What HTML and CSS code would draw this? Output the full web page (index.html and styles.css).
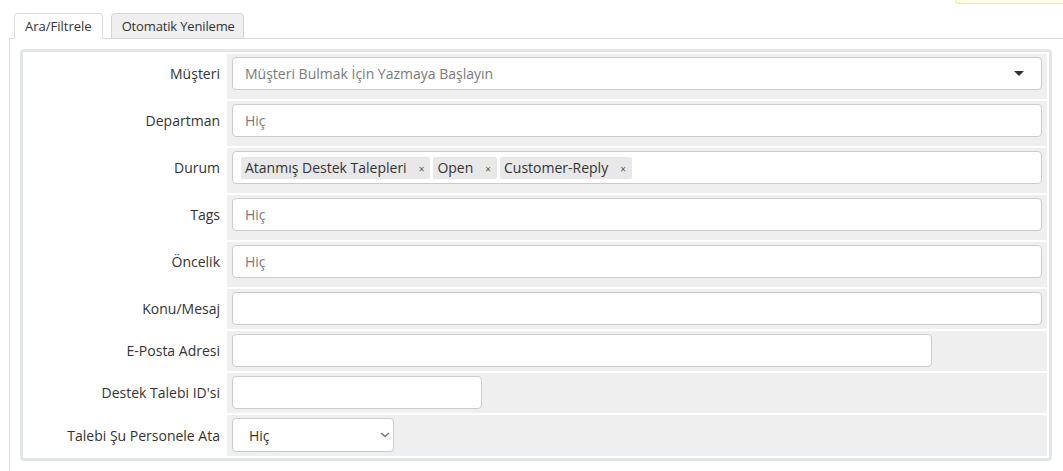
FILE: index.html
```html
<!DOCTYPE html>
<html lang="tr">
<head>
    <meta charset="UTF-8">
    <title>Destek Talepleri - Ara/Filtrele</title>
    <link rel="stylesheet" href="styles.css">
</head>
<body>
    <div class="notice"></div>

    <div class="page">
        <ul class="tabs">
            <li class="tab active">Ara/Filtrele</li>
            <li class="tab">Otomatik Yenileme</li>
        </ul>

        <div class="tab-content">
            <table class="form">
                <tr class="tall">
                    <td class="fieldlabel">Müşteri</td>
                    <td class="fieldarea">
                        <div class="field combo">
                            <span class="placeholder">Müşteri Bulmak İçin Yazmaya Başlayın</span>
                            <span class="caret"></span>
                        </div>
                    </td>
                </tr>
                <tr class="tall">
                    <td class="fieldlabel">Departman</td>
                    <td class="fieldarea">
                        <div class="field"><span class="placeholder">Hiç</span></div>
                    </td>
                </tr>
                <tr class="tall">
                    <td class="fieldlabel">Durum</td>
                    <td class="fieldarea">
                        <div class="field tags">
                            <span class="chip">Atanmış Destek Talepleri<span class="remove">×</span></span>
                            <span class="chip">Open<span class="remove">×</span></span>
                            <span class="chip">Customer-Reply<span class="remove">×</span></span>
                        </div>
                    </td>
                </tr>
                <tr class="tall">
                    <td class="fieldlabel">Tags</td>
                    <td class="fieldarea">
                        <div class="field"><span class="placeholder">Hiç</span></div>
                    </td>
                </tr>
                <tr class="tall">
                    <td class="fieldlabel">Öncelik</td>
                    <td class="fieldarea">
                        <div class="field"><span class="placeholder">Hiç</span></div>
                    </td>
                </tr>
                <tr>
                    <td class="fieldlabel">Konu/Mesaj</td>
                    <td class="fieldarea"><input type="text" class="input"></td>
                </tr>
                <tr>
                    <td class="fieldlabel">E-Posta Adresi</td>
                    <td class="fieldarea"><input type="text" class="input input-700"></td>
                </tr>
                <tr>
                    <td class="fieldlabel">Destek Talebi ID'si</td>
                    <td class="fieldarea"><input type="text" class="input input-250"></td>
                </tr>
                <tr>
                    <td class="fieldlabel">Talebi Şu Personele Ata</td>
                    <td class="fieldarea">
                        <div class="select-wrap">
                            <select class="select">
                                <option>Hiç</option>
                            </select>
                            <svg class="chevron" width="10" height="6" viewBox="0 0 10 6">
                                <path d="M1 1l4 3.5L9 1" fill="none" stroke="#777" stroke-width="1.4"/>
                            </svg>
                        </div>
                    </td>
                </tr>
            </table>
        </div>
    </div>
</body>
</html>
```

FILE: styles.css
```css
body {
    margin: 0;
    font-family: "Open Sans", "Liberation Sans", sans-serif;
    font-size: 14px;
    color: #333;
    background: #fff;
    overflow: hidden;
}
.notice {
    position: absolute;
    top: -20px;
    right: -10px;
    width: 116px;
    height: 22px;
    background: #fffde6;
    border: 1px solid #f6e983;
    border-radius: 4px;
}
.page {
    padding: 13px 0 0 9px;
}
.tabs {
    display: flex;
    gap: 8px;
    margin: 0 0 -1px;
    padding: 0 0 0 5px;
    list-style: none;
    font-size: 13px;
}
.tab {
    height: 24px;
    line-height: 24px;
    padding: 0 10px;
    border: 1px solid #d4d4d4;
    border-radius: 4px 4px 0 0;
    background: #efefef;
    color: #333;
}
.tab.active {
    background: #fff;
    border-color: #ddd #ddd #fff;
}
.tab + .tab {
    padding: 0 8px 0 10px;
    letter-spacing: -0.15px;
}
.tab-content {
    border: 1px solid #ddd;
    border-right: 0;
    border-bottom: 0;
    padding: 10px 10px 0;
    height: 422px;
}
.form {
    width: 1032px;
    border: 3px solid #e3e6e9;
    border-radius: 4px;
    border-spacing: 2px;
}
.form td {
    padding: 3px 5px 4px;
    vertical-align: middle;
}
.form tr.tall td {
    padding-bottom: 9px;
}
.fieldlabel {
    width: 190px;
    text-align: right;
    background: #fff;
}
.fieldarea {
    background: #efefef;
}
.field,
.input,
.select {
    box-sizing: border-box;
    height: 33px;
    border: 1px solid #ccc;
    border-radius: 4px;
    background: #fff;
    font: inherit;
    color: #333;
}
.field {
    display: flex;
    align-items: center;
    padding: 0 12px;
}
.placeholder {
    color: #7a7a7a;
}
.combo {
    justify-content: space-between;
}
.caret {
    width: 0;
    height: 0;
    margin-right: 5px;
    border-left: 5px solid transparent;
    border-right: 5px solid transparent;
    border-top: 5px solid #333;
}
.tags {
    gap: 3px;
    padding-left: 8px;
}
.chip {
    height: 22px;
    line-height: 22px;
    padding: 0 6px 0 4px;
    background: #e8e8e8;
    border-radius: 2px;
}
.remove {
    margin-left: 12px;
    font-size: 10px;
    color: #555;
}
.input {
    display: block;
    width: 100%;
    padding: 0 12px;
}
.input-700 {
    width: 700px;
}
.input-250 {
    width: 250px;
}
.select-wrap {
    position: relative;
    width: 162px;
}
.select {
    width: 162px;
    height: 34px;
    padding: 0 16px;
    appearance: none;
}
.chevron {
    position: absolute;
    right: 4px;
    top: 14px;
}
```
